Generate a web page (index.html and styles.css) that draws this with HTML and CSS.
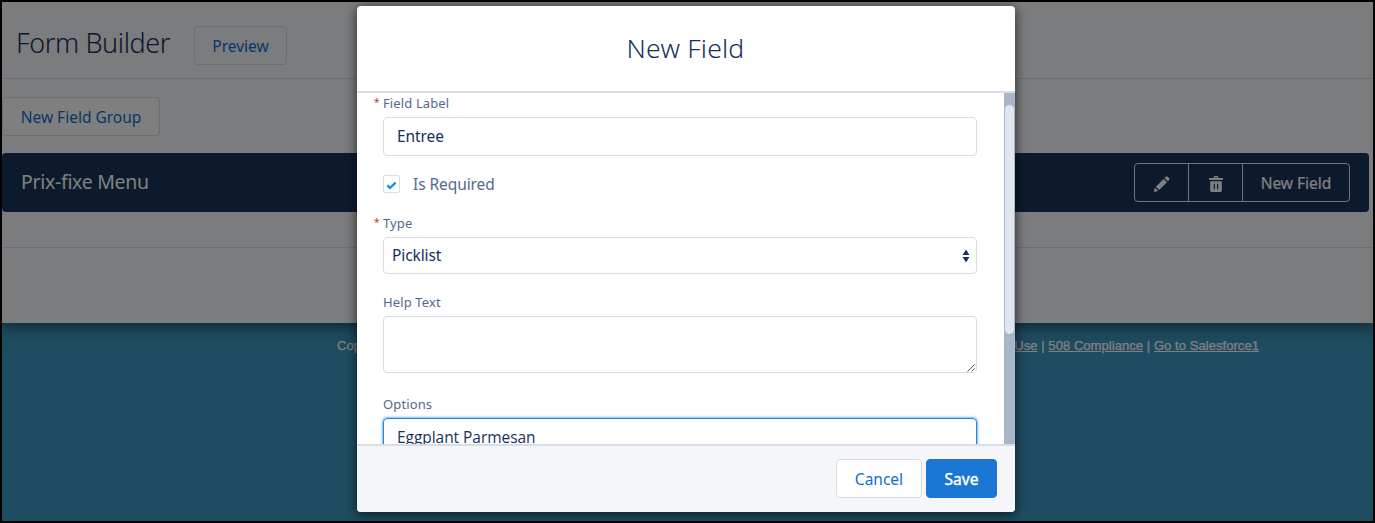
FILE: index.html
```html
<!DOCTYPE html>
<html lang="en">
<head>
<meta charset="utf-8">
<title>Form Builder</title>
<link rel="stylesheet" href="styles.css">
</head>
<body>
<div class="page">
  <main class="builder">
    <header class="page-header">
      <h1 class="page-title">Form Builder</h1>
      <button class="btn preview">Preview</button>
    </header>
    <section class="groups">
      <button class="btn solid new-group">New Field Group</button>
      <div class="group">
        <h2 class="group-title">Prix-fixe Menu</h2>
        <div class="button-group">
          <button class="group-btn icon-btn" aria-label="Edit">
            <svg width="18" height="18" viewBox="0 0 18 18" fill="currentColor"><path d="M.8 17l1.1-4.4 3.3 3.3zM2.8 11.7l7.8-7.8 3.4 3.4-7.8 7.8zM11.5 3l1.3-1.3q1-.9 2 0l1.3 1.3q.9 1 0 2l-1.3 1.3z"/></svg>
          </button>
          <button class="group-btn icon-btn" aria-label="Delete">
            <svg width="18" height="18" viewBox="0 0 18 18" fill="currentColor" fill-rule="evenodd"><path d="M2 3.1h4.6V2.2q0-1.2 1.2-1.2h2.4q1.2 0 1.2 1.2v.9H16v2H2zM8 3.1h2v-.9H8zM3.2 6.3h11.6v9.2q0 1.5-1.5 1.5H4.7q-1.5 0-1.5-1.5zM6.7 8.8v5.5h1.2V8.8zM10 8.8v5.5h1.2V8.8z"/></svg>
          </button>
          <button class="group-btn text-btn">New Field</button>
        </div>
      </div>
    </section>
  </main>
  <footer class="site-footer">
    <span>Copyright</span>
    <span class="links"><a>Use</a> | <a>508 Compliance</a> | <a>Go to Salesforce1</a></span>
  </footer>
</div>
<div class="backdrop">
  <div class="modal" role="dialog">
    <header class="modal-header"><h2 class="modal-title">New Field</h2></header>
    <div class="modal-body">
      <form class="form">
        <label class="label required"><span class="star">*</span><span>Field Label</span></label>
        <div class="control input"><span class="value">Entree</span></div>
        <label class="check-row"><span class="checkbox"><svg width="11" height="9" viewBox="0 0 11 9" fill="none" stroke="#1589ee" stroke-width="2.2"><path d="M1.3 4.4l2.7 2.6L9.6 1.6"/></svg></span><span class="check-text">Is Required</span></label>
        <label class="label required type-label"><span class="star">*</span><span>Type</span></label>
        <div class="control select"><span class="value">Picklist</span><svg width="8" height="14" viewBox="0 0 8 14" fill="#16325c"><path d="M4 .5L7.4 6H.6zM4 13.5L.6 8h6.8z"/></svg></div>
        <label class="label help-label"><span>Help Text</span></label>
        <div class="control textarea"><svg width="8" height="8" viewBox="0 0 8 8" stroke="#555" stroke-width="1"><path d="M.5 7.5l7-7M4.5 7.5l3-3"/></svg></div>
        <label class="label options-label"><span>Options</span></label>
        <div class="control input focused"><span class="value option-value">Eggplant Parmesan</span></div>
      </form>
      <div class="scroll-track"><div class="scroll-thumb"></div></div>
    </div>
    <footer class="modal-footer">
      <button class="btn solid cancel">Cancel</button>
      <button class="btn save">Save</button>
    </footer>
  </div>
</div>
</body>
</html>
```
FILE: styles.css
```css
* { box-sizing: border-box; }
body {
  margin: 0;
  width: 1375px;
  height: 523px;
  overflow: hidden;
  background: #000;
  color: #16325c;
  font-family: "Noto Sans", "Open Sans", sans-serif;
  font-size: 15.5px;
}
h1, h2 { margin: 0; font-weight: 300; }
button { font: inherit; padding: 0; cursor: pointer; }
.page {
  height: 523px;
  border: 2px solid #000;
  background: #3c98c0;
  display: flex;
  flex-direction: column;
}
.builder {
  height: 321px;
  flex: none;
  background: #f7f8fb;
  box-shadow: 0 2px 14px 2px rgba(0, 0, 0, .5);
  clip-path: inset(0 0 -30px 0);
}
.page-header {
  height: 77px;
  border-bottom: 1px solid #d8dde6;
  display: flex;
  align-items: flex-start;
  padding: 24px 0 0 14px;
}
.page-title { width: 178px; font-size: 27px; line-height: 34px; letter-spacing: -.4px; white-space: nowrap; }
.btn {
  height: 39px;
  border: 1px solid #d8dde6;
  border-radius: 4px;
  background: transparent;
  color: #0f6fce;
  white-space: nowrap;
}
.btn.solid { background: #fff; }
.preview { width: 93px; }
.groups { height: 169px; padding-top: 18px; border-bottom: 1px solid #d8dde6; }
.new-group { width: 158px; display: block; }
.group {
  width: 1367px;
  height: 59px;
  margin-top: 17px;
  padding: 0 19px;
  border-radius: 4px;
  background: #1b345d;
  color: #fff;
  display: flex;
  align-items: center;
  justify-content: space-between;
}
.group-title { font-size: 19.5px; line-height: 28px; font-weight: 400; letter-spacing: -.3px; padding-bottom: 1px; }
.button-group { display: flex; height: 39px; border: 1px solid #e8ebf0; border-radius: 4px; }
.group-btn { border: 0; background: none; color: #fff; display: flex; align-items: center; justify-content: center; }
.icon-btn { width: 54px; border-right: 1px solid #e8ebf0; padding-top: 3px; }
.text-btn { width: 106px; -webkit-text-stroke: .2px #fff; }
.site-footer {
  width: 922px;
  margin: 14px 0 0 335px;
  display: flex;
  justify-content: space-between;
  color: #fff;
  font: 13px/18px "Liberation Sans", Arial, sans-serif;
  letter-spacing: .06px;
  -webkit-text-stroke: .25px #fff;
  white-space: nowrap;
  position: relative;
}
.site-footer a { text-decoration: underline; }
.backdrop {
  position: absolute;
  top: 2px; left: 2px;
  width: 1371px; height: 519px;
  overflow: hidden;
  background: rgba(0, 0, 0, .5);
  padding: 4px 0 0 355px;
}
.modal {
  width: 658px;
  height: 506px;
  border-radius: 4px;
  background: #fff;
  box-shadow: 0 2px 12px rgba(0, 0, 0, .7);
  display: flex;
  flex-direction: column;
  overflow: hidden;
}
.modal-header {
  height: 87px;
  border-bottom: 2px solid #d8dde6;
  display: flex;
  align-items: center;
  justify-content: center;
  padding: 0 1px 2px 0;
}
.modal-title { font-size: 26.5px; line-height: 34px; letter-spacing: .2px; white-space: nowrap; }
.modal-body { height: 351px; display: flex; justify-content: space-between; overflow: hidden; }
.form { width: 620px; padding-left: 16px; }
.label, .check-row { display: flex; color: #54698d; white-space: nowrap; }
.label { height: 20px; font-size: 13px; line-height: 20px; letter-spacing: .12px; padding-left: 10px; }
.label.required { padding-left: 0; }
.star { width: 10px; color: #c23934; font-size: 10px; line-height: 18px; padding-left: 1px; }
.control {
  width: 594px;
  margin-left: 10px;
  border: 1px solid #d8dde6;
  border-radius: 4px;
  display: flex;
  align-items: center;
  white-space: nowrap;
}
.value { font-size: 15.5px; letter-spacing: -.1px; padding-bottom: 1px; }
.option-value { font-family: "Open Sans", "Noto Sans", sans-serif; letter-spacing: -.05px; padding-bottom: 2px; }
.input { height: 39px; margin-top: 4px; padding-left: 13px; }
.check-row { height: 20px; margin: 18px 0 0 10px; align-items: center; }
.check-text { font-size: 15.5px; letter-spacing: -.08px; padding-bottom: 1px; }
.checkbox {
  width: 17px; height: 18px;
  margin-right: 13px;
  border: 1px solid #d8dde6;
  border-radius: 2px;
  display: flex; align-items: center; justify-content: center;
  padding-top: 2px;
}
.type-label { margin-top: 19px; }
.select { height: 37px; margin-top: 4px; padding: 0 6px 0 8px; justify-content: space-between; }
.help-label { margin-top: 18px; }
.textarea { height: 57px; margin-top: 4px; align-items: flex-end; justify-content: flex-end; padding: 0 1px 0 0; }
.options-label { margin-top: 21px; }
.focused { border-color: #1589ee; box-shadow: 0 0 3px #0070d2; }
.scroll-track { width: 11px; background: #a8b7c7; padding: 12px 1px 0; }
.scroll-thumb { height: 229px; border-radius: 5px; background: #e0e5ee; }
.modal-footer {
  height: 68px;
  border-top: 2px solid #d8dde6;
  background: #f4f6f9;
  display: flex;
  justify-content: flex-end;
  gap: 4px;
  padding: 13px 18px 0 0;
}
.cancel { width: 86px; }
.save { width: 71px; border-color: #1976d2; background: #1976d2; color: #fff; -webkit-text-stroke: .4px #fff; }
```
